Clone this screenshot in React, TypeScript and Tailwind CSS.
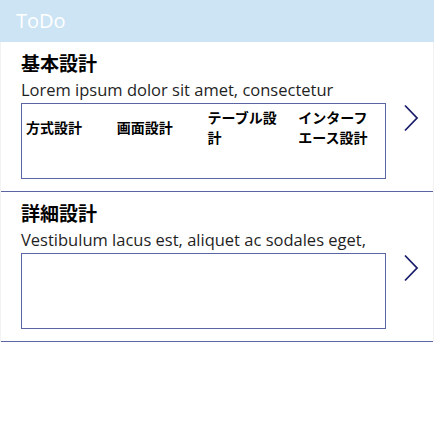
import React from "react";

type Phase = {
  title: string;
  note: string;
  tasks: string[];
};

const phases: Phase[] = [
  {
    title: "基本設計",
    note: "Lorem ipsum dolor sit amet, consectetur",
    tasks: ["方式設計", "画面設計", "テーブル設計", "インターフエース設計"],
  },
  {
    title: "詳細設計",
    note: "Vestibulum lacus est, aliquet ac sodales eget,",
    tasks: [],
  },
];

const jp = { fontFamily: '"Noto Sans CJK JP", "Open Sans", sans-serif' };
const latin = { fontFamily: '"Open Sans", "Noto Sans CJK JP", sans-serif' };

function Chevron() {
  return (
    <svg width="16" height="28" viewBox="0 0 16 28" className="block">
      <path d="M2 1.5 L14 14 L2 26.5" fill="none" stroke="#1b1f6b" strokeWidth="1.8" />
    </svg>
  );
}

export default function App() {
  return (
    <div className="w-[434px] h-[434px] bg-white overflow-hidden">
      {/* Header */}
      <div className="h-[42px] bg-[#cce4f4] flex items-center pl-4">
        <span className="text-white text-[20px] leading-[28px]" style={latin}>
          ToDo
        </span>
      </div>

      {/* List */}
      <div className="border-x border-[#f2f2f2]">
        {phases.map((p) => (
          <div key={p.title} className="border-b border-[#5a65a5] pt-[7px] pb-3 pl-[20px]">
            <div className="text-[19px] leading-[28px] font-bold text-black" style={jp}>
              {p.title}
            </div>
            <div className="text-[16.5px] leading-[25px] text-[#1f1f1f]" style={latin}>
              {p.note}
            </div>
            <div className="flex items-start mt-px">
              <div className="w-[365px] h-[76px] border border-[#5a65a5]">
                <div className="grid grid-cols-4 h-[45px]">
                  {p.tasks.map((t) => (
                    <div key={t} className="flex items-center pl-1 pr-[10px]">
                      <span className="text-[14px] leading-5 font-bold text-black" style={jp}>
                        {t}
                      </span>
                    </div>
                  ))}
                </div>
              </div>
              <div className="ml-[17px] mt-px">
                <Chevron />
              </div>
            </div>
          </div>
        ))}
      </div>
    </div>
  );
}
